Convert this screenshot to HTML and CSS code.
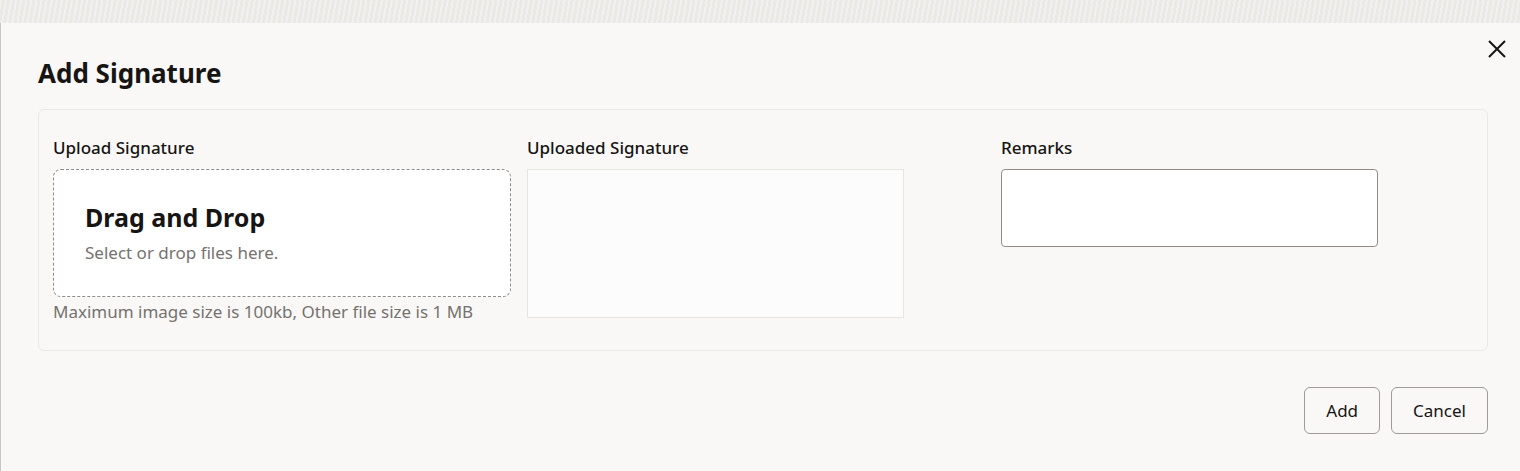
FILE: index.html
```html
<!DOCTYPE html>
<html>
<head>
	<title>Add Signature</title>
<link rel="stylesheet" href="styles.css">
</head>
<body>
	<div class="backdrop"></div>
	<div class="dialog">
		<button class="close-btn" aria-label="Close">
			<svg width="18" height="18" viewBox="0 0 18 18">
				<path d="M1 1 L17 17 M17 1 L1 17" stroke="#161513" stroke-width="2" fill="none"/>
			</svg>
		</button>
		<h1>Add Signature</h1>
		<div class="panel">
			<div class="field">
				<label>Upload Signature</label>
				<div class="drop-zone">
					<div class="drop-title">Drag and Drop</div>
					<div class="drop-sub">Select or drop files here.</div>
				</div>
				<div class="hint">Maximum image size is 100kb, Other file size is 1 MB</div>
			</div>
			<div class="field">
				<label>Uploaded Signature</label>
				<div class="preview"></div>
			</div>
			<div class="field">
				<label>Remarks</label>
				<textarea class="remarks"></textarea>
			</div>
		</div>
		<div class="actions">
			<button class="btn">Add</button>
			<button class="btn">Cancel</button>
		</div>
	</div>
</body>
</html>
```

FILE: styles.css
```css
body {
	font-family: "Noto Sans", "Open Sans", sans-serif;
	color: #161513;
	margin: 0;
	padding: 0;
	background-color: #eceae7;
}

.backdrop {
	height: 23px;
	background-color: #ebe9e6;
	background-image: repeating-linear-gradient(100deg, rgba(255,255,255,0.35) 0 2px, transparent 2px 5px);
}

.dialog {
	position: relative;
	height: 448px;
	box-sizing: border-box;
	padding: 34px 32px 0 37px;
	background-color: #f9f8f6;
	border-left: 1px solid #c8c6c3;
}

.close-btn {
	position: absolute;
	top: 17px;
	right: 14px;
	width: 18px;
	height: 18px;
	padding: 0;
	border: none;
	background: none;
	cursor: pointer;
}

.close-btn svg {
	display: block;
}

h1 {
	margin: 0 0 20px 0;
	font-size: 26px;
	line-height: 32px;
	font-weight: 700;
}

.panel {
	display: grid;
	grid-template-columns: 458px 458px 1fr;
	column-gap: 16px;
	align-items: start;
	padding: 28px 14px 28px 14px;
	border: 1px solid #ebe9e6;
	border-radius: 6px;
}

.field label {
	display: block;
	font-size: 17px;
	line-height: 20px;
	font-weight: 500;
	margin-bottom: 11px;
}

.drop-zone {
	height: 128px;
	box-sizing: border-box;
	padding: 31px 31px 0 31px;
	background-color: #ffffff;
	border: 1px dashed #8f8c89;
	border-radius: 8px;
}

.drop-title {
	font-size: 25px;
	line-height: 32px;
	font-weight: 700;
}

.drop-sub {
	margin-top: 10px;
	font-size: 17px;
	line-height: 20px;
	color: #75726f;
}

.hint {
	margin-top: 5px;
	font-size: 17px;
	line-height: 20px;
	color: #75726f;
}

.preview {
	width: 377px;
	height: 149px;
	box-sizing: border-box;
	background-color: #fcfcfc;
	border: 1px solid #e8e6e3;
}

.remarks {
	display: block;
	width: 377px;
	height: 78px;
	box-sizing: border-box;
	margin: 0;
	padding: 8px 12px;
	font-family: inherit;
	font-size: 17px;
	background-color: #ffffff;
	border: 1px solid #8f8c89;
	border-radius: 4px;
	resize: none;
}

.actions {
	display: flex;
	justify-content: flex-end;
	gap: 11px;
	margin-top: 36px;
}

.btn {
	height: 47px;
	padding: 0 21px;
	font-family: inherit;
	font-size: 17px;
	color: #161513;
	background-color: transparent;
	border: 1px solid #9e9b98;
	border-radius: 6px;
	cursor: pointer;
}
```
